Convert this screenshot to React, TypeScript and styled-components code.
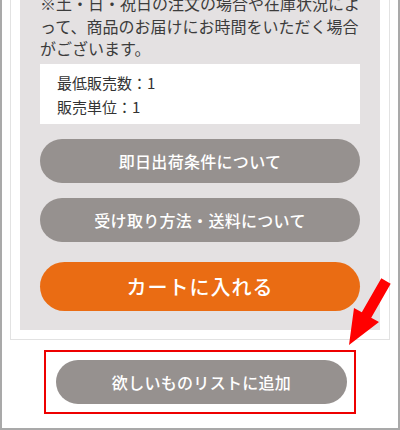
import styled, { createGlobalStyle } from "styled-components";

const GlobalStyle = createGlobalStyle`
  html, body {
    margin: 0;
    padding: 0;
    background: #ffffff;
    font-family: "Noto Sans CJK JP", "Noto Sans", sans-serif;
    overflow: hidden;
  }
`;

const Frame = styled.div`
  position: relative;
  width: 400px;
  height: 430px;
  box-sizing: border-box;
  border: 2px solid #a9a9a9;
  border-top: none;
  background: #ffffff;
  overflow: hidden;
`;

const Card = styled.div`
  margin: -40px 8px 0;
  padding: 9px;
  border: 1px solid #e2e2e2;
  background: #ffffff;
`;

const Panel = styled.div`
  background: #e4e1e2;
  padding: 22px 20px 19px;
  display: flex;
  flex-direction: column;
`;

const Notice = styled.p`
  margin: 0 -8px 0 0;
  font-size: 16px;
  line-height: 22.5px;
  color: #3c3c3c;
`;

const InfoBox = styled.div`
  margin-top: 4px;
  background: #ffffff;
  padding: 7px 17px 5px;
  font-size: 15px;
  line-height: 24px;
  color: #333333;
`;

const Buttons = styled.div`
  display: flex;
  flex-direction: column;
  gap: 15px;
  margin-top: 15px;
`;

const PillButton = styled.button<{ $tone?: "gray" | "orange"; $big?: boolean }>`
  display: flex;
  align-items: center;
  justify-content: center;
  width: 100%;
  height: ${(p) => (p.$big ? "49px" : "44px")};
  margin-top: ${(p) => (p.$big ? "5px" : "0")};
  border: none;
  border-radius: 25px;
  background: ${(p) => (p.$tone === "orange" ? "#ea6c13" : "#96918f")};
  color: #ffffff;
  font-family: "Noto Sans CJK JP", "Noto Sans", sans-serif;
  font-size: ${(p) => (p.$big ? "20px" : "16px")};
  font-weight: 500;
  letter-spacing: ${(p) => (p.$big ? "1px" : "0.3px")};
  padding: 0;
  cursor: pointer;
`;

const WishArea = styled.div`
  display: flex;
  justify-content: center;
  margin-top: 10px;
`;

const Highlight = styled.div`
  width: 312px;
  box-sizing: border-box;
  border: 2px solid #ee0000;
  padding: 8px 7px 8px 10px;
`;

const WishButton = styled(PillButton)`
  width: 291px;
`;

const Arrow = styled.svg`
  position: absolute;
  left: 0;
  top: 0;
  pointer-events: none;
`;

export default function App() {
  return (
    <>
      <GlobalStyle />
      <Frame>
        <Card>
          <Panel>
            <Notice>
              ※土・日・祝日の注文の場合や在庫状況によって、商品のお届けにお時間をいただく場合がございます。
            </Notice>
            <InfoBox>
              <div>最低販売数：1</div>
              <div>販売単位：1</div>
            </InfoBox>
            <Buttons>
              <PillButton>即日出荷条件について</PillButton>
              <PillButton>受け取り方法・送料について</PillButton>
              <PillButton $tone="orange" $big>
                カートに入れる
              </PillButton>
            </Buttons>
          </Panel>
        </Card>
        <WishArea>
          <Highlight>
            <WishButton>欲しいものリストに追加</WishButton>
          </Highlight>
        </WishArea>
        <Arrow width="400" height="430" viewBox="0 0 400 430">
          <polygon
            points="379.3,278.2 388.7,283.8 369.2,317.8 377,322 347,345 352,308 359.8,312.2"
            fill="#ff0000"
          />
        </Arrow>
      </Frame>
    </>
  );
}
